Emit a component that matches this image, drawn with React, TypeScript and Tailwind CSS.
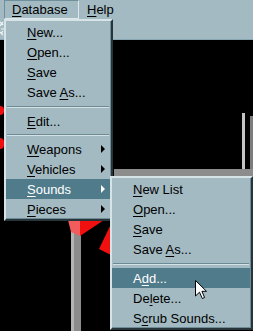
import React from "react";

// Win95-style "Slate" menus over a black editor canvas
const font = { fontFamily: '"Liberation Sans", Arial, sans-serif' };

type Item = {
  before: string;
  key: string;
  after: string;
  sub?: boolean;
  active?: boolean;
};

const dbItems: (Item | "sep" | "sep2")[] = [
  { before: "", key: "N", after: "ew..." },
  { before: "", key: "O", after: "pen..." },
  { before: "", key: "S", after: "ave" },
  { before: "Save ", key: "A", after: "s..." },
  "sep",
  { before: "", key: "E", after: "dit..." },
  "sep2",
  { before: "", key: "W", after: "eapons", sub: true },
  { before: "", key: "V", after: "ehicles", sub: true },
  { before: "", key: "S", after: "ounds", sub: true, active: true },
  { before: "", key: "P", after: "ieces", sub: true },
];

const soundItems: (Item | "sep" | "sep2")[] = [
  { before: "", key: "N", after: "ew List" },
  { before: "", key: "O", after: "pen..." },
  { before: "", key: "S", after: "ave" },
  { before: "Save ", key: "A", after: "s..." },
  "sep",
  { before: "A", key: "d", after: "d...", active: true },
  { before: "De", key: "l", after: "ete..." },
  { before: "S", key: "c", after: "rub Sounds..." },
];

function Separator({ tall }: { tall?: boolean }) {
  return (
    <div className={tall ? "pt-[4px] pb-[3px] px-[1px]" : "pt-[3px] pb-[3px] px-[1px]"}>
      <div className="h-[1px] bg-[#6d8b95]" />
      <div className="h-[1px] bg-[#d4e2e6]" />
    </div>
  );
}

function MenuRow({ item }: { item: Item }) {
  return (
    <div
      className={`h-[20px] flex items-center justify-between pl-[21px] pr-[5px] text-[13px] leading-none ${
        item.active ? "bg-[#4f7b8b] text-white" : "text-black"
      }`}
    >
      <span className="whitespace-pre">
        {item.before}
        <u className="underline-offset-2">{item.key}</u>
        {item.after}
      </span>
      {item.sub && (
        <span
          className={`w-0 h-0 border-y-[4px] border-y-transparent border-l-[4px] ${
            item.active ? "border-l-white" : "border-l-black"
          }`}
        />
      )}
    </div>
  );
}

function MenuList({ items }: { items: (Item | "sep" | "sep2")[] }) {
  return (
    <>
      {items.map((it, i) =>
        it === "sep" ? (
          <Separator key={i} tall />
        ) : it === "sep2" ? (
          <Separator key={i} />
        ) : (
          <MenuRow key={i} item={it} />
        )
      )}
    </>
  );
}

export default function App() {
  return (
    <div
      className="relative w-[253px] h-[331px] overflow-hidden bg-black flex flex-col"
      style={font}
    >
      {/* menu bar */}
      <div className="h-[19px] bg-[#a3bac2] flex items-stretch text-[13px] text-black">
        <div className="ml-[4px] w-[75px] border border-t-[#6f8f9a] border-l-[#6f8f9a] border-b-[#dce8ec] border-r-[#dce8ec] pl-[7px] pt-[1px] flex items-center">
          <span>
            <u className="underline-offset-2">D</u>atabase
          </span>
        </div>
        <div className="ml-[8px] pt-[1px] flex items-center">
          <span>
            <u className="underline-offset-2">H</u>elp
          </span>
        </div>
      </div>

      {/* toolbar, mostly hidden */}
      <div className="relative h-[21px] bg-[#a3bac2] border-b border-[#86a6b1]">
        <svg className="absolute left-0 top-[1px]" width="5" height="19" viewBox="0 0 5 19">
          <path d="M0 2 L3 5 M3 2 L0 6 M1 9 L4 9 M0 12 L3 15 M3 11 L1 14" stroke="#f4f8f8" strokeWidth="1.2" fill="none" />
        </svg>
      </div>

      {/* editor canvas */}
      <div className="relative flex-1 bg-black">
        <div className="absolute left-[-4px] top-[66px] w-[8px] h-[9px] rounded-full bg-[#ee1010]" />
        <div className="absolute left-[-4px] top-[98px] w-[8px] h-[11px] rounded-full bg-[#ee1010]" />

        {/* right frame */}
        <div className="absolute left-[242px] top-[73px] w-[3px] h-[57px] bg-[#c4c4c4]" />
        <div className="absolute left-[250px] top-[76px] w-[3px] h-[54px] bg-[#7c7c7c]" />
        <div className="absolute left-[114px] top-[129px] w-[139px] h-[7px] bg-[#8c8c8c]" />

        {/* lower post */}
        <div className="absolute left-[71px] top-[180px] w-[3px] h-[120px] bg-[#b4b4b4]" />
        <div className="absolute left-[74px] top-[180px] w-[7px] h-[120px] bg-[#8c8c8c]" />
        <svg className="absolute left-0 top-0" width="253" height="290" viewBox="0 0 253 290">
          <polygon points="68,180 80,180 80,196 71,192" fill="#f25c5c" />
          <polygon points="80,180 104,180 80,196" fill="#f01010" />
          <polygon points="111,184 99,209 111,215" fill="#f01010" />
        </svg>
      </div>

      {/* Database dropdown */}
      <div className="absolute left-[4px] top-[19px] w-[109px] bg-[#a3bac2] border-2 border-t-[#d6e4e8] border-l-[#d6e4e8] border-b-[#27353a] border-r-[#27353a] pt-[1px] pr-[1px] shadow-[inset_-1px_-1px_0_#6f8c96]">
        <MenuList items={dbItems} />
      </div>

      {/* Sounds submenu */}
      <div className="absolute left-[110px] top-[176px] w-[143px] bg-[#a3bac2] border-2 border-t-[#d6e4e8] border-l-[#d6e4e8] border-b-[#27353a] border-r-[#27353a] pt-[1px] pr-[1px] shadow-[inset_-1px_-1px_0_#6f8c96]">
        <MenuList items={soundItems} />
      </div>

      {/* mouse pointer */}
      <svg className="absolute left-[195px] top-[280px]" width="13" height="20" viewBox="0 0 13 20">
        <path
          d="M0.5 0.5 L0.5 16 L4.5 12.2 L7.3 18.5 L9.6 17.5 L6.9 11.3 L11.5 11.3 Z"
          fill="#ffffff"
          stroke="#000000"
          strokeWidth="1"
          strokeLinejoin="miter"
        />
      </svg>
    </div>
  );
}
